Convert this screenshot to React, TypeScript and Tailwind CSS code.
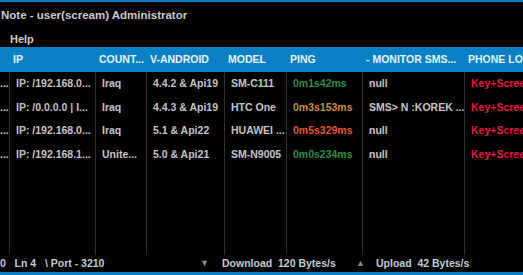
const cols = [
  { w: "w-[10px]", head: "" },
  { w: "w-[86px]", head: "IP" },
  { w: "w-[51px]", head: "COUNT..." },
  { w: "w-[78px]", head: "V-ANDROID" },
  { w: "w-[62px]", head: "MODEL" },
  { w: "w-[76px]", head: "PING" },
  { w: "w-[102px]", head: "- MONITOR SMS..." },
  { w: "w-[120px]", head: "PHONE LOCK" },
];

type Row = { cells: string[]; ping: string };

const rows: Row[] = [
  { cells: ["...", "IP: /192.168.0...", "Iraq", "4.4.2 & Api19", "SM-C111", "0m1s42ms", "null", "Key+Screen"], ping: "text-[#23934a]" },
  { cells: ["...", "IP: /0.0.0.0 | I...", "Iraq", "4.4.3 & Api19", "HTC One", "0m3s153ms", "SMS> N :KOREK ...", "Key+Screen"], ping: "text-[#cf8a3c]" },
  { cells: ["...", "IP: /192.168.0...", "Iraq", "5.1 & Api22", "HUAWEI ...", "0m5s329ms", "null", "Key+Screen"], ping: "text-[#e8522c]" },
  { cells: ["...", "IP: /192.168.1...", "Unite...", "5.0 & Api21", "SM-N9005", "0m0s234ms", "null", "Key+Screen"], ping: "text-[#23934a]" },
];

export default function App() {
  return (
    <div
      className="w-[523px] h-[275px] bg-black overflow-hidden flex flex-col border-t-2 border-[#0a7cc2]"
      style={{ fontFamily: '"Liberation Sans", Arial, sans-serif' }}
    >
      {/* title */}
      <div className="h-[27px] flex items-center pl-[1px] text-[11.5px] font-bold text-[#c9c9c9] whitespace-nowrap">
        Note - user(scream) Administrator
      </div>
      {/* menu */}
      <div className="h-[19px] flex items-center pl-[10px] pt-[2px] text-[11px] font-bold text-[#c9c9c9]">Help</div>

      {/* header */}
      <div className="h-[25px] bg-[#0a80c6] flex items-center text-[10.5px] font-bold text-[#e8f2fa] whitespace-nowrap shrink-0">
        {cols.map((c, i) => (
          <div key={i} className={`${c.w} shrink-0 overflow-hidden pl-[3px]`}>
            {c.head}
          </div>
        ))}
      </div>

      {/* body */}
      <div className="h-[183px] flex shrink-0 text-[10.5px] font-bold text-[#c4c4c4] whitespace-nowrap">
        {cols.map((c, ci) => (
          <div
            key={ci}
            className={`${c.w} shrink-0 overflow-hidden flex flex-col ${ci < cols.length - 1 ? "border-r border-[#2e2e2e]" : ""}`}
          >
            {rows.map((r, ri) => (
              <div
                key={ri}
                className={`h-[23.5px] shrink-0 flex items-center overflow-hidden ${ci === 0 ? "pl-0" : "pl-[6px]"} ${
                  ci === 5 ? r.ping : ci === 7 ? "text-[#e2163f]" : ""
                }`}
              >
                {r.cells[ci]}
              </div>
            ))}
          </div>
        ))}
      </div>

      {/* status */}
      <div className="flex-1 flex items-center pt-[1px] text-[10.5px] font-bold text-[#c3cbd3] whitespace-nowrap">
        <span className="w-[200px]">0&nbsp;&nbsp;&nbsp;Ln 4&nbsp;&nbsp;&nbsp;\ Port - 3210</span>
        <span className="w-[22px] text-[9px] text-[#8a8a8a]">▼</span>
        <span className="w-[134px]">Download&nbsp;&nbsp;120 Bytes/s</span>
        <span className="w-[20px] text-[9px] text-[#8a8a8a]">▲</span>
        <span>Upload&nbsp;&nbsp;42 Bytes/s</span>
      </div>
      <div className="h-[3px] bg-[#0a7cc2] shrink-0" />
    </div>
  );
}
